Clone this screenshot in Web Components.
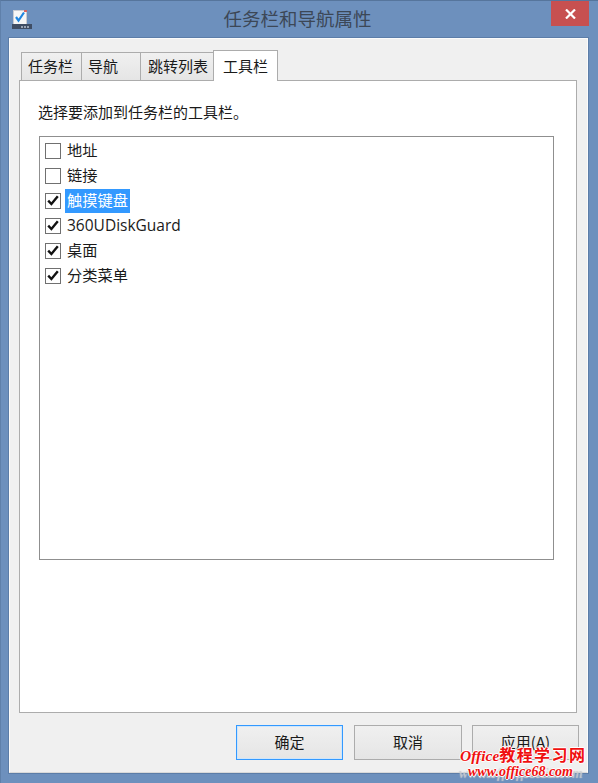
<!DOCTYPE html>
<html lang="zh">
<head>
<meta charset="utf-8">
<title>任务栏和导航属性</title>
<style>
  html, body { margin: 0; padding: 0; height: 100%; background: #6d90bd; }
  body { font-family: "Noto Sans CJK SC", "Liberation Sans", sans-serif; overflow: hidden; }
</style>
</head>
<body>
<prop-window title-text="任务栏和导航属性">
  <tab-strip></tab-strip>
  <tool-panel>
    <check-row>地址</check-row>
    <check-row>链接</check-row>
    <check-row checked selected>触摸键盘</check-row>
    <check-row checked latin>360UDiskGuard</check-row>
    <check-row checked>桌面</check-row>
    <check-row checked>分类菜单</check-row>
  </tool-panel>
  <button-bar></button-bar>
</prop-window>
<water-mark></water-mark>

<script>
class PropWindow extends HTMLElement {
  constructor() {
    super();
    this.attachShadow({ mode: "open" });
  }

  connectedCallback() {
    this.shadowRoot.innerHTML = /* html */`
    <style>
      :host {
        display: flex;
        flex-direction: column;
        box-sizing: border-box;
        width: 598px;
        height: 783px;
        background: #6d90bd;
        border-top: 1px solid #56759c;
        border-left: 1px solid #5f80aa;
        padding: 0 10px 10px 8px;
      }
      .title {
        display: flex;
        align-items: center;
        justify-content: space-between;
        height: 37px;
        flex: none;
      }
      .icon { width: 22px; height: 22px; margin: 0 0 0 3px; flex: none; }
      .name {
        flex: 1;
        text-align: center;
        font-size: 18.5px;
        line-height: 35px;
        height: 37px;
        color: #3c4756;
        padding-left: 10px;
      }
      .close {
        flex: none;
        width: 38px;
        height: 25px;
        align-self: flex-start;
        margin-right: -1px;
        background: #c75050;
        display: flex;
        align-items: center;
        justify-content: center;
      }
      .client {
        flex: 1;
        display: flex;
        flex-direction: column;
        background: #f0f0f0;
        border-top: 1px solid #fbfbfb;
        border-left: 1px solid #fbfbfb;
        border-right: 1px solid #fbfbfb;
        border-bottom: 1px solid #d9d9d9;
        padding: 11px 0 0 9px;
        box-shadow: 0 0 0 1px #5c7da8;
      }
    </style>
    <div class="title">
      <svg class="icon" viewBox="0 0 22 22">
        <rect x="1.5" y="1.5" width="13" height="14" fill="#f6f6f6" stroke="#c9ccd2"/>
        <rect x="12" y="1" width="3" height="2" fill="#d8625e"/>
        <path d="M4 8 L6.5 11.5 L12 3.5" fill="none" stroke="#1f86e0" stroke-width="2.2"/>
        <rect x="0" y="15" width="20" height="5" fill="#3f4d64"/>
        <rect x="9" y="17" width="2" height="2" fill="#9aa4b4"/>
        <rect x="12" y="17" width="2" height="2" fill="#9aa4b4"/>
        <rect x="15" y="17" width="2" height="2" fill="#9aa4b4"/>
      </svg>
      <div class="name">${this.getAttribute("title-text")}</div>
      <div class="close">
        <svg width="11" height="10" viewBox="0 0 11 10">
          <path d="M1 0.5 L10 9.5 M10 0.5 L1 9.5" stroke="#fff" stroke-width="2.2"/>
        </svg>
      </div>
    </div>
    <div class="client"><slot></slot></div>`;
  }
}

class TabStrip extends HTMLElement {
  constructor() {
    super();
    this.attachShadow({ mode: "open" });
  }

  connectedCallback() {
    const tabs = [["任务栏", 61, 7], ["导航", 60, 7], ["跳转列表", 74, 8], ["工具栏", 65, 10, true]];
    this.shadowRoot.innerHTML = /* html */`
    <style>
      :host {
        display: flex;
        align-items: flex-end;
        height: 31px;
        padding-left: 2px;
        margin-bottom: -1px;
        position: relative;
        z-index: 1;
      }
      .tab {
        box-sizing: border-box;
        height: 28px;
        margin-bottom: 1px;
        border: 1px solid #acacac;
        border-bottom: 0;
        background: linear-gradient(#f0f0f0, #e5e5e5);
        font-size: 15px;
        line-height: 25px;
        color: #1a1a1a;
        white-space: nowrap;
      }
      .tab + .tab { margin-left: -1px; }
      .tab.on {
        height: 31px;
        margin-bottom: 0;
        background: #fff;
        line-height: 29px;
        position: relative;
      }
    </style>
    ${tabs.map(([t, w, pad, on]) => `<div class="tab${on ? " on" : ""}" style="width:${w}px;padding-left:${pad - 1}px">${t}</div>`).join("")}`;
  }
}

class ToolPanel extends HTMLElement {
  constructor() {
    super();
    this.attachShadow({ mode: "open" });
  }

  connectedCallback() {
    this.shadowRoot.innerHTML = /* html */`
    <style>
      :host {
        display: flex;
        flex-direction: column;
        box-sizing: border-box;
        width: 558px;
        height: 633px;
        background: #fff;
        border: 1px solid #acacac;
        padding: 19px 0 0 19px;
      }
      .hint {
        font-size: 15px;
        line-height: 24px;
        color: #1a1a1a;
        height: 24px;
        margin: 0 0 12px -1px;
      }
      .list {
        box-sizing: border-box;
        width: 515px;
        height: 424px;
        border: 1px solid #8f8f8f;
        padding: 1px 0 0 5px;
      }
    </style>
    <div class="hint">选择要添加到任务栏的工具栏。</div>
    <div class="list"><slot></slot></div>`;
  }
}

class CheckRow extends HTMLElement {
  constructor() {
    super();
    this.attachShadow({ mode: "open" });
  }

  connectedCallback() {
    const checked = this.hasAttribute("checked");
    const selected = this.hasAttribute("selected");
    this.shadowRoot.innerHTML = /* html */`
    <style>
      :host {
        display: flex;
        align-items: center;
        height: 25px;
        font-size: 15.25px;
        color: #1a1a1a;
      }
      .box {
        box-sizing: border-box;
        width: 16px;
        height: 16px;
        flex: none;
        background: #fff;
        border: 1px solid #707070;
        display: flex;
        align-items: center;
        justify-content: center;
      }
      .label {
        margin-left: 4px;
        padding: 0 2px;
        height: 24px;
        line-height: 21px;
        white-space: nowrap;
      }
      .label.sel { background: #3399ff; color: #fff; }
      :host([latin]) .label {
        font-family: "Open Sans", "Noto Sans", sans-serif;
        font-size: 15.5px;
        line-height: 23px;
      }
    </style>
    <div class="box">${checked ? `<svg width="12" height="11" viewBox="0 0 12 11"><path d="M1.2 5.6 L4.4 9 L10.8 1.2" fill="none" stroke="#111" stroke-width="2.4"/></svg>` : ""}</div>
    <div class="label${selected ? " sel" : ""}"><slot></slot></div>`;
  }
}

class ButtonBar extends HTMLElement {
  constructor() {
    super();
    this.attachShadow({ mode: "open" });
  }

  connectedCallback() {
    this.shadowRoot.innerHTML = /* html */`
    <style>
      :host {
        display: flex;
        padding: 12px 0 0 217px;
        font-size: 15px;
      }
      .btn {
        box-sizing: border-box;
        width: 108px;
        height: 35px;
        margin-right: 10px;
        border: 1px solid #acacac;
        background: linear-gradient(#f0f0f0, #e5e5e5);
        text-align: center;
        line-height: 31px;
        color: #1a1a1a;
      }
      .btn.def {
        width: 107px;
        margin-right: 11px;
        border-color: #3399ff;
        box-shadow: inset 0 0 0 1px #cfe6fb;
      }
      .btn.apply { width: 107px; margin-right: 0; }
    </style>
    <div class="btn def">确定</div>
    <div class="btn">取消</div>
    <div class="btn apply">应用(A)</div>`;
  }
}

class WaterMark extends HTMLElement {
  constructor() {
    super();
    this.attachShadow({ mode: "open" });
  }

  connectedCallback() {
    this.shadowRoot.innerHTML = /* html */`
    <style>
      :host {
        position: absolute;
        left: 460px;
        top: 745px;
        width: 138px;
        height: 34px;
        color: #f01010;
        white-space: nowrap;
        text-shadow: -1px 0 #fff, 1px 0 #fff, 0 -1px #fff, 0 1px #fff;
      }
      .brand {
        font: italic bold 15.5px/19px "Liberation Serif", serif;
      }
      .brand span {
        font: bold 16px/19px "Noto Sans CJK SC", sans-serif;
        letter-spacing: 1.4px;
      }
      .url {
        font: italic bold 14px/14px "Liberation Serif", serif;
        margin-left: 8px;
        text-shadow: -1px 0 #fff, 1px 0 #fff, 0 -1px #fff, 0 1px #fff, -9px 2px 1px #c9ccd0, 10px 2px 1px #c9ccd0;
      }
    </style>
    <div class="brand">Office<span>教程学习网</span></div>
    <div class="url">www.office68.com</div>`;
  }
}

customElements.define("prop-window", PropWindow);
customElements.define("tab-strip", TabStrip);
customElements.define("tool-panel", ToolPanel);
customElements.define("check-row", CheckRow);
customElements.define("button-bar", ButtonBar);
customElements.define("water-mark", WaterMark);
</script>
</body>
</html>
